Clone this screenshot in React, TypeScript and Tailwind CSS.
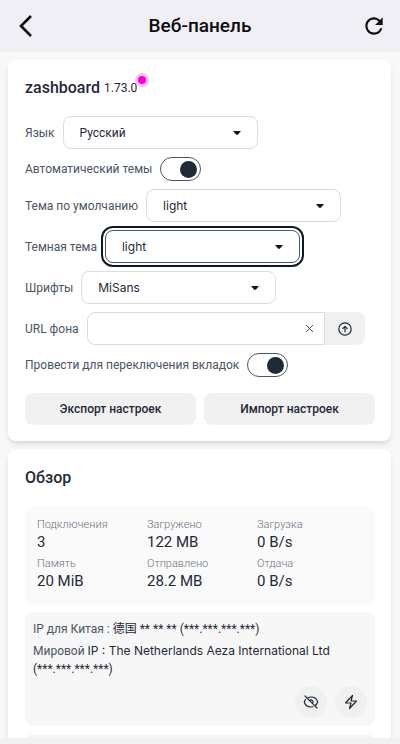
import React, { useState } from 'react';
import { HiOutlineBolt, HiOutlineEyeSlash, HiOutlineXMark } from 'react-icons/hi2';
import { MdRefresh } from 'react-icons/md';

const stats = [
  { label: 'Подключения', value: '3' },
  { label: 'Загружено', value: '122 MB' },
  { label: 'Загрузка', value: '0 B/s' },
  { label: 'Память', value: '20 MiB' },
  { label: 'Отправлено', value: '28.2 MB' },
  { label: 'Отдача', value: '0 B/s' },
];

type SelectRowProps = {
  id: string;
  label: string;
  options: string[];
  focused?: boolean;
  latin?: boolean;
};

const SelectRow = ({ id, label, options, focused, latin }: SelectRowProps) => (
  <div className="flex items-center gap-2">
    <label htmlFor={id} className="text-[#4b5563]">{label}</label>
    <div className="relative w-[195px]">
      <select
        id={id}
        className={`block h-[33px] w-full appearance-none rounded-lg border bg-white px-4 text-xs text-[#1f2937] outline-[#0f172a] ${
          focused ? 'border-[#4b5563] outline-2 outline-offset-2' : 'border-[#dcdcdc]'
        } ${latin ? 'font-[Inter,sans-serif]' : ''}`}
      >
        {options.map((option) => (
          <option key={option}>{option}</option>
        ))}
      </select>
      <svg viewBox="0 0 8 4" className="pointer-events-none absolute top-[15px] right-[17px] h-1 w-2 fill-[#0f172a]">
        <path d="M0 0h8L5 3.5Q4 4.4 3 3.5z" />
      </svg>
    </div>
  </div>
);

const ToggleRow = ({ id, label }: { id: string; label: string }) => {
  const [on, setOn] = useState(true);

  return (
    <div className="flex items-center gap-2">
      <label htmlFor={id} className="text-[#4b5563]">{label}</label>
      <input
        id={id}
        type="checkbox"
        checked={on}
        onChange={() => setOn(!on)}
        className="flex h-6 w-[41px] appearance-none items-center rounded-full border border-[#4b5563] px-[3px] before:size-[17px] before:rounded-full before:bg-[#1f2937] checked:justify-end"
      />
    </div>
  );
};

const App = () => {
  const [url, setUrl] = useState('');

  return (
    <div className="flex h-screen flex-col bg-[#f7f9f8] font-[Roboto,'Noto_Sans_CJK_SC',sans-serif] text-xs leading-5 text-[#1f2937]">
      <header className="flex h-[52px] shrink-0 items-center justify-between bg-[#f0eff5] px-4 text-[#0c0c10]">
        <button aria-label="Назад" className="flex size-5 items-center justify-center">
          <svg viewBox="0 0 20 22" className="h-[22px] w-5 fill-none stroke-current stroke-[2.6]">
            <path d="M15 1 5 11l10 10" />
          </svg>
        </button>
        <h1 className="text-[19px] font-medium">Веб-панель</h1>
        <button aria-label="Обновить" className="flex size-5 items-center justify-center">
          <MdRefresh className="size-[26px] shrink-0" />
        </button>
      </header>

      <main className="flex min-h-0 flex-1 flex-col gap-[9px] overflow-hidden p-2 pr-[9px] pb-0">
        <section className="shrink-0 rounded-lg bg-white p-4 pl-[17px] shadow-md">
          <div className="flex h-6 items-center gap-1">
            <h2 className="text-base font-medium">zashboard</h2>
            <span className="relative">
              1.73.0
              <span className="absolute -top-[5px] -right-3 size-[14px] rounded-full border-[3px] border-[#fbc4f0] bg-[#ff00d3]" />
            </span>
          </div>

          <div className="mt-4 flex flex-col gap-2">
            <SelectRow id="lang" label="Язык" options={['Русский', 'English']} />
            <ToggleRow id="auto-theme" label="Автоматический темы" />
            <SelectRow id="default-theme" label="Тема по умолчанию" options={['light', 'dark']} latin />
            <SelectRow id="dark-theme" label="Темная тема" options={['light', 'dark']} focused latin />
            <SelectRow id="font" label="Шрифты" options={['MiSans', 'Roboto']} latin />
            <div className="flex items-center gap-2">
              <label htmlFor="bg-url" className="text-[#4b5563]">URL фона</label>
              <div className="flex h-[33px] min-w-0 flex-1 pr-[10px]">
                <div className="flex min-w-0 flex-1 items-center rounded-l-lg border border-[#dcdcdc] pr-2">
                  <input
                    id="bg-url"
                    type="text"
                    value={url}
                    onChange={(e) => setUrl(e.target.value)}
                    className="h-full min-w-0 flex-1 px-3 outline-none"
                  />
                  <button aria-label="Очистить" onClick={() => setUrl('')}>
                    <HiOutlineXMark size={13} />
                  </button>
                </div>
                <button aria-label="Загрузить" className="flex w-10 items-center justify-center rounded-r-lg bg-[#f0f0f0]">
                  <svg viewBox="0 0 14 14" className="size-[14px] fill-none stroke-current stroke-[1.2]" strokeLinecap="round" strokeLinejoin="round">
                    <circle cx="7" cy="7" r="6.2" />
                    <path d="M7 9.8V4.6M4.8 6.6 7 4.4l2.2 2.2" />
                  </svg>
                </button>
              </div>
            </div>
            <ToggleRow id="swipe" label="Провести для переключения вкладок" />
          </div>

          <div className="mt-4 grid grid-cols-2 gap-2">
            <button className="h-8 rounded-lg bg-[#f1f1f1] font-medium">Экспорт настроек</button>
            <button className="h-8 rounded-lg bg-[#f1f1f1] font-medium">Импорт настроек</button>
          </div>
        </section>

        <section className="flex shrink-0 flex-col gap-2 rounded-lg bg-white p-4 pl-[17px] shadow-md">
          <h2 className="mb-2 text-base leading-6 font-medium">Обзор</h2>

          <dl className="grid grid-cols-3 rounded-lg bg-[#fafafa] p-3 pr-2 pb-2">
            {stats.map((item) => (
              <div key={item.label} className="h-[39px]">
                <dt className="text-[11px] leading-[14px] font-light text-[#6b7280]">{item.label}</dt>
                <dd className="text-[15px] leading-5">{item.value}</dd>
              </div>
            ))}
          </dl>

          <div className="rounded-lg bg-[#f7f7f7] p-2">
            <p className="leading-[18px]">
              <span className="text-[#4b5563]">IP для Китая : </span>德国 ** ** ** (***.***.***.***)
            </p>
            <p className="mt-1 leading-[18px]">
              <span className="text-[#4b5563]">Мировой </span>
              <span className="font-[Inter,sans-serif]">IP : The Netherlands Aeza International Ltd</span>
              <span className="block">(***.***.***.***)</span>
            </p>
            <div className="mt-2 flex justify-end gap-2">
              <button aria-label="Скрыть IP" className="flex size-8 items-center justify-center rounded-full bg-[#f0f0f0]">
                <HiOutlineEyeSlash size={16} strokeWidth={1.8} />
              </button>
              <button aria-label="Проверить" className="flex size-8 items-center justify-center rounded-full bg-[#f0f0f0]">
                <HiOutlineBolt size={16} strokeWidth={1.8} />
              </button>
            </div>
          </div>

          <div className="h-24 rounded-lg bg-[#f7f7f7]" />
        </section>
      </main>

      <footer className="h-[6px] shrink-0 bg-[#f1f1f1]" />
    </div>
  );
};

export default App;
